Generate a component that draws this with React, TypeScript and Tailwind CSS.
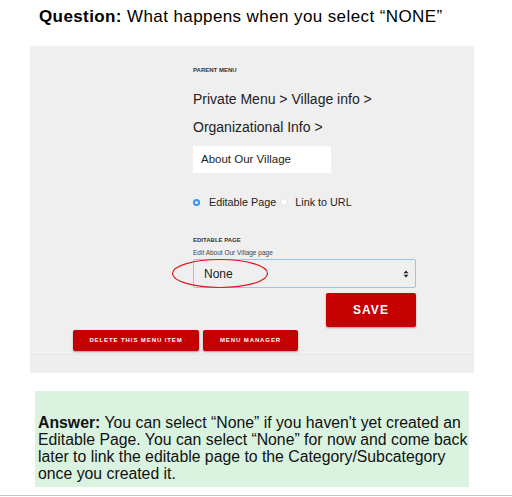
const sans = "font-['Liberation_Sans',Arial,Helvetica,sans-serif]";

function RedButton({ label, className }: { label: string; className: string }) {
  return (
    <button
      className={`flex items-center justify-center rounded-[2px] bg-[#c40000] font-bold uppercase text-white shadow-[0_1px_2px_rgba(0,0,0,0.35)] ${className}`}
    >
      {label}
    </button>
  );
}

function Radio({ checked }: { checked: boolean }) {
  return checked ? (
    <span className="flex h-[7px] w-[7px] shrink-0 items-center justify-center rounded-full bg-[#3b8ff0]">
      <span className="h-[3px] w-[3px] rounded-full bg-white" />
    </span>
  ) : (
    <span className="block h-[8px] w-[8px] shrink-0 rounded-full border border-[#e2e2e2] bg-white" />
  );
}

export default function App() {
  return (
    <div className={`h-[497px] w-[512px] overflow-hidden bg-white text-[#111] ${sans}`}>
      <h1 className="pl-[39px] pt-[7px] text-[17px] leading-[19px] tracking-[0.4px] text-black">
        <span className="font-bold">Question:</span> What happens when you select “NONE”
      </h1>

      <div className="ml-[30px] mt-[20px] flex h-[327px] w-[444px] flex-col bg-[#efefef]">
        <div className="ml-[163px] w-[223px] pt-[21px]">
          <div className="text-[6px] font-bold leading-[7px] text-[#333]">PARENT MENU</div>

          <div className="mt-[11px] text-[14px] leading-[28px] text-[#222]">
            <div>Private Menu &gt; Village info &gt;</div>
            <div>Organizational Info &gt;</div>
          </div>

          <div className="mt-[5px] flex h-[27px] w-[138px] items-center bg-white pl-[8px] text-[11.5px] text-[#222]">
            About Our Village
          </div>

          <div className="mt-[22px] flex items-center text-[10.8px] leading-[14px] text-[#222]">
            <Radio checked />
            <span className="ml-[9px]">Editable Page</span>
            <span className="ml-[4px]">
              <Radio checked={false} />
            </span>
            <span className="ml-[7px]">Link to URL</span>
          </div>

          <div className="mt-[28px] text-[6px] font-bold leading-[7px] text-[#333]">EDITABLE PAGE</div>
          <div className="mt-[5px] text-[6.5px] leading-[8px] text-[#444]">Edit About Our Village page</div>

          <div className="relative mt-[2px] flex h-[29px] items-center justify-between rounded-[2px] border border-[#98c4f0] pl-[10px] pr-[6px] text-[12px] text-[#222]">
            <span>None</span>
            <svg width="6" height="8" viewBox="0 0 6 8">
              <path d="M3 0.5 L5.5 3.3 H0.5 Z M3 7.5 L5.5 4.7 H0.5 Z" fill="#222" />
            </svg>
            <svg
              className="absolute left-[-23px] top-[-2px]"
              width="98"
              height="31"
              viewBox="0 0 98 31"
            >
              <ellipse cx="49" cy="15.5" rx="47.5" ry="14" fill="none" stroke="#e0171b" strokeWidth="1.2" />
            </svg>
          </div>

          <div className="mt-[5px] flex justify-end">
            <RedButton label="Save" className="h-[34px] w-[90px] text-[12px] tracking-[1px]" />
          </div>
        </div>

        <div className="ml-[43px] mt-[3px] flex gap-[4px]">
          <RedButton label="Delete this menu item" className="h-[21px] w-[126px] text-[6px] tracking-[0.9px]" />
          <RedButton label="Menu Manager" className="h-[21px] w-[95px] text-[6px] tracking-[0.9px]" />
        </div>

        <div className="mt-[3px] flex-1 border-t border-[#e6e6e6] bg-[#eeeeee]" />
      </div>

      <div className="ml-[35px] mt-[18px] h-[96px] w-[434px] bg-[#d9f3e0] pl-[3px] pt-[23px] text-[15.8px] leading-[17px] text-[#111]">
        <span className="font-bold">Answer:</span> You can select “None” if you haven't yet created an
        <br />
        Editable Page. You can select “None” for now and come back
        <br />
        later to link the editable page to the Category/Subcategory
        <br />
        once you created it.
      </div>

      <div className="mt-[8px] h-px w-full bg-[#c4c4c4]" />
    </div>
  );
}
